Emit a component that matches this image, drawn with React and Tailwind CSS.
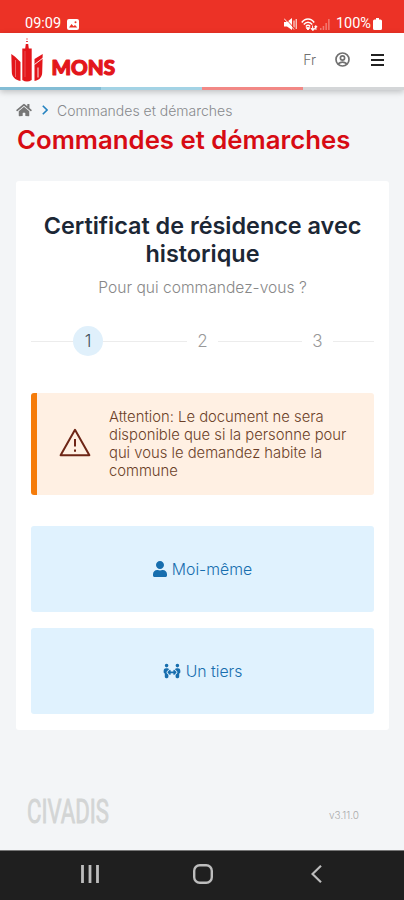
import React from "react";
import { FaHome, FaUser } from "react-icons/fa";
import { FaPeopleArrows } from "react-icons/fa6";

const choices = [
  { label: "Moi-même", icon: <FaUser className="w-[14px] h-4" /> },
  { label: "Un tiers", icon: <FaPeopleArrows className="w-[18px] h-4" /> },
];

function StatusBar() {
  return (
    <div className="h-[33px] bg-[#ec3226] text-white flex items-end justify-between pl-[25px] pr-[22px] pb-[1px] font-['Roboto',sans-serif]">
      <div className="flex items-center gap-[6px]">
        <span className="text-[14.5px] leading-4">09:09</span>
        <svg viewBox="0 0 12 11" className="w-3 h-[11px]">
          <rect width="12" height="11" rx="2" fill="currentColor" />
          <path d="M2 8.5 4.5 5l2 2.2L8 6l2.3 2.5z" fill="#ec3226" />
          <circle cx="8.5" cy="3.2" r="1" fill="#ec3226" />
        </svg>
      </div>
      <div className="flex items-center">
        {/* muted */}
        <svg viewBox="0 0 13 12" className="w-[13px] h-3" fill="currentColor">
          <path d="M0 4h3l5-4v12L3 8.5H0z" />
          <path d="M10 2.5v7M12.2 1v10" stroke="currentColor" fill="none" />
          <path d="M1 0l10 11" stroke="#ec3226" strokeWidth=".9" />
          <path d="M0 .5l10 11" stroke="currentColor" strokeWidth=".9" />
        </svg>
        {/* wifi */}
        <svg viewBox="0 0 17 13" className="w-[17px] h-[13px] ml-[4px]" fill="none" stroke="currentColor">
          <path d="M.8 4.5C4-.2 10-.2 13.2 4.5M2.8 6.5c2.400-3 6-3 8.400 0M4.900 8.500c1.300-1.600 2.900-1.600 4.200 0" strokeWidth="1.500" />
          <path d="m7 12-1.800-2.300h3.600z" fill="currentColor" />
          <path d="M11.500 7.500v3h-1.700l2.200 2.200 2-2.200h-1.500M15 12V9h1.200L14.800 7.500 13.500 9" strokeWidth=".8" fill="currentColor" />
        </svg>
        {/* cell signal */}
        <svg viewBox="0 0 10 11" className="w-[10px] h-[11px] ml-[2px]" fill="currentColor">
          <path d="M0 9h1.500v2H0zM2.700 7h1.500v4H2.700zM5.400 4h1.500v7H5.400zM8.100 0h1.500v11H8.100z" opacity=".35" />
        </svg>
        <span className="text-[14.5px] leading-4 ml-[6px]">100%</span>
        <svg viewBox="0 0 9 12" className="w-[9px] h-3 ml-[2px]" fill="currentColor">
          <path d="M3 0h3v1.500h1.500Q9 1.500 9 3v7.500Q9 12 7.500 12h-6Q0 12 0 10.500V3q0-1.500 1.500-1.500H3z" />
        </svg>
      </div>
    </div>
  );
}

function MonsLogo() {
  return (
    <svg viewBox="0 0 108 48" className="w-[108px] h-12">
      <g fill="#e3161b">
        <path d="M15.400 2.500h1.200v1H15.400zM15.200 5h1.600v1h-1.600zM14.800 8h2.400l.6 4.500h2.900V44q-4.700 3-9.400 0V12.500h2.900z" />
        <path d="M.3 18l3.500 2.500 5.700 5.500v19C4 44 .8 40.500.8 36z" />
        <path d="M31.700 18l-8.200 5v22c5.500-1 7.700-4.500 7.700-9z" />
      </g>
      <path d="M14 15v26" stroke="#fff" strokeWidth=".5" opacity=".5" />
      <path d="M4.500 24v17" stroke="#fff" strokeWidth=".6" opacity=".6" />
      <path d="M23.500 28.500l8.500-6.500M27 31.500v10" stroke="#fff" strokeWidth=".9" />
      <text
        x="40.500"
        y="38.500"
        textLength="63.500"
        lengthAdjust="spacingAndGlyphs"
        className="font-['Lato',sans-serif] font-black text-[20.5px]"
        fill="#e3161b"
        stroke="#e3161b"
        strokeWidth="1.200"
        strokeLinejoin="round"
      >
        MONS
      </text>
    </svg>
  );
}

function Header() {
  return (
    <header className="bg-white shadow-[0_2px_6px_rgba(0,0,0,0.22)]">
      <div className="h-[54px] flex items-center justify-between pl-[11px] pr-[20px]">
        <MonsLogo />
        <div className="flex items-center text-[#707070] pb-[1px]">
          <span className="text-[14px] leading-5 font-light mr-[19px]">Fr</span>
          <svg viewBox="0 0 15 15" className="size-[15px] mr-[21px]" fill="none" stroke="currentColor" strokeWidth="1.700">
            <circle cx="7.500" cy="7.500" r="6.500" />
            <circle cx="7.500" cy="6" r="2.100" />
            <path d="M3 12q4.500-3.600 9 0" />
          </svg>
          <svg viewBox="0 0 13 12" className="w-[13px] h-3" stroke="#222" strokeWidth="2">
            <path d="M0 1h13M0 6h13M0 11h13" />
          </svg>
        </div>
      </div>
      <div className="h-[3px] grid grid-cols-4">
        <div className="bg-[#83bdd5]" />
        <div className="bg-[#a3d3e5]" />
        <div className="bg-[#f28885]" />
        <div className="bg-[#d4d6d8]" />
      </div>
    </header>
  );
}

function Steps() {
  return (
    <div className="mt-[28px] h-[30px] flex items-center text-[17px] font-light text-[#999]">
      <div className="w-[42px] h-px bg-[#ececec]" />
      <div className="size-[30px] rounded-full bg-[#e0f0fb] text-[#44505c] flex items-center justify-center pt-px">1</div>
      <div className="w-[84px] h-px bg-[#ececec]" />
      <div className="w-[31px] text-center pt-px">2</div>
      <div className="w-[84px] h-px bg-[#ececec]" />
      <div className="w-[31px] text-center pt-px">3</div>
      <div className="flex-1 h-px bg-[#ececec]" />
    </div>
  );
}

function Warning() {
  return (
    <div className="mt-[37px] h-[102px] rounded-[3px] bg-[#fff0e3] border-l-[6px] border-[#f57c0a] flex items-center">
      <svg viewBox="0 0 32 29" className="w-8 h-[29px] ml-[22px] mb-[4px] shrink-0" fill="none" stroke="#6e2516" strokeWidth="2">
        <path d="M16 1.800 30.400 27.200H1.600z" strokeLinejoin="round" />
        <path d="M16 11v7.500M16 21.500v2.200" />
      </svg>
      <p className="ml-[18px] text-[14.8px] leading-[18px] font-light text-[#6b3f28] whitespace-nowrap">
        Attention: Le document ne sera
        <br />
        disponible que si la personne pour
        <br />
        qui vous le demandez habite la
        <br />
        commune
      </p>
    </div>
  );
}

export default function App() {
  return (
    <div className="w-[404px] h-[900px] bg-[#f3f5f7] flex flex-col overflow-hidden font-['Inter',sans-serif]">
      <StatusBar />
      <Header />

      <main className="px-4">
        <nav className="mt-[11px] h-[18px] flex items-center text-[#87898c]">
          <FaHome className="w-4 h-[14px] text-[#777]" />
          <svg viewBox="0 0 6 10" className="w-[6px] h-[10px] ml-[10px]" fill="none" stroke="#2583c0" strokeWidth="1.600">
            <path d="m.8.800 4.200 4.200-4.200 4.200" />
          </svg>
          <span className="ml-[9px] text-[14px] font-light">Commandes et démarches</span>
        </nav>
        <h1 className="mt-[5px] ml-px text-[25.75px] leading-[32px] font-semibold text-[#d70b13] whitespace-nowrap">
          Commandes et démarches
        </h1>

        <section className="mt-[25px] -mr-[1px] w-[373px] h-[549px] bg-white rounded-[3px] pl-[15px] pr-[15px] pt-[31px]">
          <h2 className="text-center text-[23.4px] leading-[28px] font-semibold text-[#1c2735] whitespace-nowrap">
            Certificat de résidence avec
            <br />
            historique
          </h2>
          <p className="mt-[10px] text-center text-[15.6px] leading-[20px] font-light text-[#888]">
            Pour qui commandez-vous ?
          </p>
          <Steps />
          <Warning />
          <div className="mt-[31px] flex flex-col gap-4">
            {choices.map((c) => (
              <button
                key={c.label}
                className="h-[86px] rounded-[3px] bg-[#e0f2fe] text-[#176eae] flex items-center justify-center gap-[5px] text-[15.8px]"
              >
                {c.icon}
                <span className="font-light pt-[2px]">{c.label}</span>
              </button>
            ))}
          </div>
        </section>
      </main>

      <footer className="mt-auto h-[119px] flex items-start justify-between pl-[26px] pr-[45px] pt-[60px]">
        <svg viewBox="0 0 150 44" className="w-[150px] h-11">
          <text
            x="1"
            y="32"
            textLength="82"
            lengthAdjust="spacingAndGlyphs"
            className="font-['Roboto',sans-serif] text-[34px]"
            fill="#d3d5d5"
            stroke="#d3d5d5"
            strokeWidth=".9"
          >
            CIVADIS
          </text>
        </svg>
        <span className="mt-[16px] text-[10px] leading-4 font-light text-[#aaa]">v3.11.0</span>
      </footer>

      <div className="h-[50px] shrink-0 bg-[#1f1f1f] border-t border-[#777] flex items-center text-[#bdbdbd] pb-[3px]">
        <svg viewBox="0 0 18 18" className="size-[18px] ml-[81px]" stroke="currentColor" strokeWidth="2.800">
          <path d="M1.500 0v18M9 0v18M16.500 0v18" />
        </svg>
        <svg viewBox="0 0 20 20" className="size-5 ml-[94px]" fill="none" stroke="currentColor" strokeWidth="2.400">
          <rect x="1.200" y="1.200" width="17.600" height="17.600" rx="5.500" />
        </svg>
        <svg viewBox="0 0 11 18" className="w-[11px] h-[18px] ml-[98px]" fill="none" stroke="currentColor" strokeWidth="2.200">
          <path d="M10 .800 1.500 9l8.500 8.200" />
        </svg>
      </div>
    </div>
  );
}
